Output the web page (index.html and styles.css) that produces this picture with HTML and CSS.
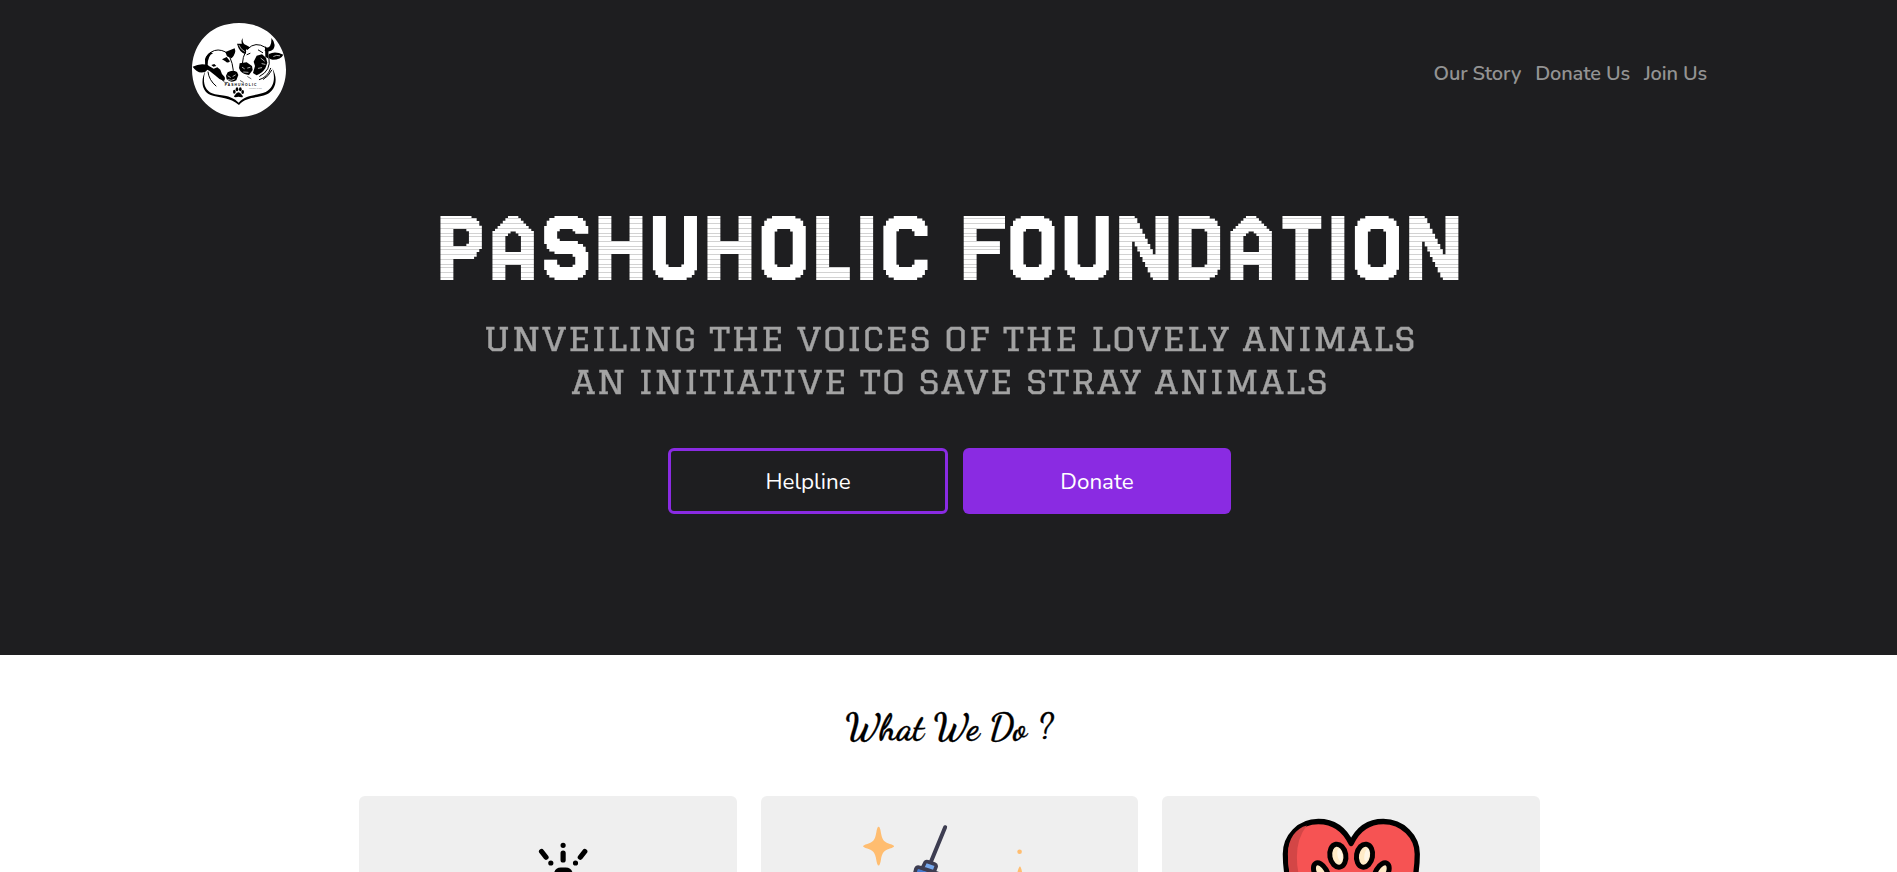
FILE: index.html
```html
<!DOCTYPE html>
<html lang="en">
<head>
<meta charset="utf-8">
<title>Pashuholic Foundation</title>
<link rel="stylesheet" href="styles.css">
</head>
<body>
<header class="hero">
  <nav class="navbar">
    <a class="brand" href="#">
      <svg class="logo" viewBox="0 0 360 330" aria-label="Pashuholic">
        <path class="white" d="M144 28Q177 20 211 28C275 39 318 96 318 164C318 243 257 306 177 306S36 243 36 164C36 96 80 39 144 28Z"/>
        <path d="M38 155Q60 143 84 150Q90 160 76 170Q54 179 38 155ZM136 111L164 100Q170 114 155 130L141 124Z"/>
        <path class="line" d="M79 150Q72 124 94 111Q113 99 137 111L149 125Q158 145 160 166"/>
        <path d="M75 133Q79 119 92 111L99 115Q83 122 83 151L101 161L112 157L121 164Q124 178 134 186Q137 193 132 198Q117 194 105 181Q92 167 76 161ZM94 150L103 147L109 153L100 155ZM143 172Q157 163 171 171L175 180L169 196Q153 206 140 193L138 182ZM126 133L140 126L150 139Q143 146 136 139Z"/>
        <path class="cut" d="M144 183l7 4m8-3l7-4m-22 14q10 5 19-1"/>
        <path d="M191 65Q184 75 192 87Q203 92 210 97L202 105Q182 96 185 75ZM274 69Q290 86 280 103Q272 112 254 108L256 98Q276 101 274 69ZM171 86L185 86L198 101L198 116Q179 116 171 86ZM267 117Q285 107 310 119Q303 134 278 134Q261 131 267 117Z"/>
        <path class="cut" d="M177 91q5 13 16 18M281 124q8-5 18-2"/>
        <path d="M179 145L200 142L216 153L218 165L207 180Q190 179 181 168L177 159ZM230 122L246 118L258 128L262 143L256 160Q246 175 230 181L219 174L225 153L221 140ZM255 94L265 102L266 131L256 125Z"/>
        <path class="line" d="M204 101Q226 78 256 97M197 109Q188 127 187 146M201 119l9-4m25-10l13 8m19 17Q274 166 239 184"/>
        <path class="cut" d="M187 157l6 4m10-2l7-2m-19 14l13 1m39-42l10 8m-7 8l9 2m-20 12l10-2"/>
        <path d="M76 168C69 192 68 222 96 235C119 244 150 237 176 263C199 236 231 243 257 231C282 218 287 190 277 160C296 193 286 226 261 238C231 251 201 243 177 270C150 246 119 250 92 240C61 227 64 190 76 168Z"/>
        <path class="line" d="M84 171Q87 196 108 213M238 194Q263 187 272 160M250 193Q265 185 275 166"/>
        <path class="thin" d="M126 195q8 11 18 8m37-6l9 5m13-17l10 6"/>
        <ellipse cx="163" cy="230" rx="4" ry="6"/><ellipse cx="171" cy="223" rx="4" ry="6"/><ellipse cx="181" cy="223" rx="4" ry="6"/><ellipse cx="188" cy="231" rx="4" ry="6"/>
        <path d="M165 240Q175 223 186 240Q192 247 184 247Q175 243 167 247Q158 246 165 240Z"/>
        <text class="logo-name" x="134" y="212" textLength="95">PASHUHOLIC</text>
        <text class="logo-sub" x="207" y="221" textLength="38">FOUNDATION</text>
      </svg>
    </a>
    <div class="links"><a href="#">Our Story</a><a href="#">Donate Us</a><a href="#">Join Us</a></div>
  </nav>
  <h1 class="title"><span class="scan">PA</span>S<span class="scan">H</span>U<span class="scan">H</span>O<span class="scan">LI</span>C <span class="scan">F</span>OU<span class="scan">NDATI</span>O<span class="scan">N</span></h1>
  <p class="tagline">UNVEILING THE VOICES OF THE LOVELY ANIMALS<br>AN INITIATIVE TO SAVE STRAY ANIMALS</p>
  <div class="actions"><a class="btn outline" href="#">Helpline</a><a class="btn filled" href="#">Donate</a></div>
</header>
<main class="services">
  <h2 class="heading">What We Do ?</h2>
  <div class="cards">
    <article class="card">
      <svg viewBox="359 796 378 76">
        <g class="ray"><path d="M563.3 853v7M541.7 851.5l4.5 5.8M585 851.5l-4.5 5.8"/><path d="M563.3 845.3v.01M551 863v.01M575.7 863v.01"/></g>
        <path d="M554 876Q554 867.5 561 867.5H566Q573 867.5 573 876Z"/>
      </svg>
    </article>
    <article class="card">
      <svg viewBox="761 796 378 76">
        <path class="spark" d="M878.7 826.7Q880.2 826.7 881 832.5C882.2 840 884.3 842.2 890 844Q894.2 845.2 894.2 846.3Q894.2 847.4 890 848.6C884.3 850.5 882.2 852.5 881 860Q880.2 865.5 878.7 865.5Q877.2 865.5 876.4 860C875.2 852.5 873.1 850.5 867.4 848.6Q863.2 847.4 863.2 846.3Q863.2 845.2 867.4 844C873.1 842.2 875.2 840 876.4 832.5Q877.2 826.7 878.7 826.7Z"/>
        <circle class="spark" cx="1019.8" cy="851.8" r="2.3"/><path class="spark" d="M1017.5 873Q1019 866.5 1020.2 866.5Q1021.2 866.5 1022.5 873Z"/>
        <path class="needle" d="M945.3 827.2L931 862"/>
        <path class="hub dark-blue" d="M914 877L916 869Q917 866.5 920 867.5L938 873.5L937 880Z"/>
        <path class="hub light-blue" d="M923.5 866L925.2 862.5Q926 861.2 928 861.8L934.5 864Q936.8 865 936.2 867L934.3 872L922 868Z"/>
      </svg>
    </article>
    <article class="card">
      <svg viewBox="1162 796 378 76">
        <path class="heart" d="M1351.3 843.5Q1341 821.5 1318.5 821.5C1299 821.5 1285.5 837 1285.5 854Q1285.5 866 1288 880H1415Q1417.5 866 1417.5 854C1417.5 837 1403 821.5 1383.5 821.5Q1361.5 821.5 1351.3 843.5Z"/>
        <path class="shade" d="M1307 825.5Q1297 838 1297 857Q1297 866 1299 875H1289.8Q1288 864 1288 854C1288 839 1296 828 1307 825.5Z"/>
        <g class="toe"><ellipse cx="1338" cy="855.7" rx="8" ry="11.6" transform="rotate(-10 1338 855.7)"/><ellipse cx="1364.7" cy="855.7" rx="8" ry="11.6" transform="rotate(10 1364.7 855.7)"/><ellipse cx="1321" cy="872.5" rx="6" ry="10.5" transform="rotate(-30 1321 872.5)"/><ellipse cx="1382" cy="872.5" rx="6" ry="10.5" transform="rotate(30 1382 872.5)"/></g>
        <g class="shine"><ellipse cx="1340" cy="855" rx="2.4" ry="6.5" transform="rotate(-10 1340 855)"/><ellipse cx="1367" cy="855" rx="2.4" ry="6.5" transform="rotate(10 1367 855)"/></g>
      </svg>
    </article>
  </div>
</main>
</body>
</html>
```
FILE: styles.css
```css
* { box-sizing: border-box; }
body { margin: 0; background: #fff; font-family: Nunito, "Open Sans", sans-serif; }
a { text-decoration: none; color: inherit; }
svg { display: block; }
h1, h2, p { margin: 0; }
.hero { height: 655px; background: #1e1e20; display: flex; flex-direction: column; align-items: center; }
.navbar { width: 1537px; height: 195px; padding-top: 15px; display: flex; justify-content: space-between; }
.logo { width: 120px; height: 110px; }
.logo .white { fill: #fff; }
.line, .thin, .cut { fill: none; stroke: #000; stroke-width: 3; stroke-linecap: round; }
.thin { stroke-width: 1.8; }
.cut { stroke: #fff; stroke-width: 2; }
.logo-name { font: bold 10px "Liberation Sans", sans-serif; }
.logo-sub { font: 5px "Liberation Sans", sans-serif; fill: #777; }
.links { display: flex; gap: 14px; padding: 44px 10px 0 0; font-size: 20px; line-height: 30px; font-weight: 600; letter-spacing: -0.15px; color: #939393; }
.title { margin-left: 2px; font: 400 106.2px/107px "Jersey 25", Roboto, sans-serif; color: #fff; white-space: nowrap; }
/* faint horizontal seams across the straight-sided letters */
.scan {
  color: transparent;
  -webkit-background-clip: text;
  background-clip: text;
  background-image: linear-gradient(#d2d2d2 0 1px, #fff 1px 5px, #d2d2d2 5px 6px, #fff 6px 10px, #d2d2d2 10px 11px, #fff 11px 15px, #d2d2d2 15px 16px, #fff 16px 18px, #d2d2d2 18px 19px, #fff 19px 23px, #d2d2d2 23px 24px, #fff 24px 28px, #d2d2d2 28px 29px, #fff 29px 31px);
  background-size: 100% 31px;
  background-position: 0 23px;
}
.tagline { margin: 15px 0 0 3px; font: 32.4px/43px Graduate, "DejaVu Serif", serif; letter-spacing: 1px; word-spacing: -1.6px; transform: scaleX(1.113); -webkit-text-stroke: 0.3px #a3a3a3; color: #a3a3a3; text-align: center; white-space: nowrap; }
.actions { display: flex; gap: 15px; margin: 45px 0 0 2px; }
.btn { height: 66px; border-radius: 6px; display: flex; align-items: center; justify-content: center; color: #fff; font-size: 22.4px; }
.outline { width: 280px; border: 3px solid #8a2be2; }
.filled { width: 268px; background: #8a2be2; }
.services { height: 217px; overflow: hidden; display: flex; flex-direction: column; align-items: center; padding-top: 51px; }
.heading { margin-left: 1px; font: bold 36.3px/44px "Dancing Script", cursive; -webkit-text-stroke: 0.3px #000; color: #000; }
.cards { display: grid; grid-template-columns: repeat(3, 1fr); gap: 24px; width: 1181px; margin-top: 46px; margin-left: 2px; }
.card { height: 340px; background: #efefef; border-radius: 6px; }
.card svg { width: 100%; height: 76px; }
.ray { fill: none; stroke: #000; stroke-width: 5.2; stroke-linecap: round; }
.spark { fill: #ffbd70; }
.needle { fill: none; stroke: #3d3d51; stroke-width: 4; stroke-linecap: round; }
.hub { stroke: #3d3d51; stroke-width: 3.6; stroke-linejoin: round; }
.dark-blue { fill: #477bd1; }
.light-blue { fill: #76a8ed; }
.heart { fill: #f65353; stroke: #000; stroke-width: 5.3; stroke-linejoin: round; }
.shade { fill: #d34646; }
.toe { fill: #ffebc7; stroke: #000; stroke-width: 5; }
.shine { fill: #fff6e6; }
```
